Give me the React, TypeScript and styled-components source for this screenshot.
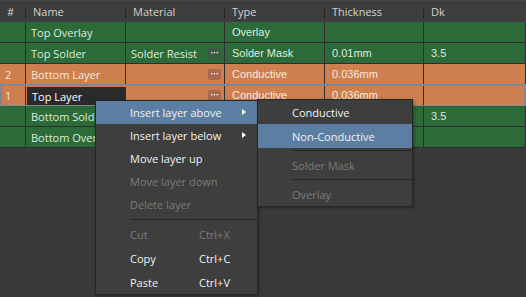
import React from "react";
import styled, { createGlobalStyle, css } from "styled-components";

const GlobalStyle = createGlobalStyle`
  html, body {
    margin: 0;
    padding: 0;
    background: #3a3a3a;
  }
  body {
    width: 526px;
    height: 297px;
    overflow: hidden;
    font-family: "Open Sans", "Noto Sans", sans-serif;
    font-size: 11px;
  }
`;

const COLS = "26px 100px 99px 100px 99px 1fr";

const Screen = styled.div`
  position: relative;
  width: 526px;
  height: 297px;
  background: #3a3a3a;
  overflow: hidden;
`;

const Header = styled.div`
  display: grid;
  grid-template-columns: ${COLS};
  height: 21px;
  background: #3d3d3d;
  border-top: 1px solid #474747;
  color: #d2d2d2;
`;

const HeadCell = styled.div<{ $first?: boolean }>`
  position: relative;
  display: flex;
  align-items: center;
  padding-left: ${(p) => (p.$first ? "7px" : "7px")};
  &::before {
    content: "";
    display: ${(p) => (p.$first ? "none" : "block")};
    position: absolute;
    left: -1px;
    top: 6px;
    height: 11px;
    width: 1px;
    background: #262626;
  }
`;

type Tone = "green" | "orange";

const toneBg = { green: "#2c6a39", orange: "#cd7f4f" };
const toneText = { green: "#ddeedd", orange: "#f7e9dc" };
const toneBtn = { green: "#3d5b44", orange: "#a8694c" };

const Row = styled.div<{ $tone: Tone; $selected?: boolean }>`
  position: relative;
  display: grid;
  grid-template-columns: ${COLS};
  height: 21px;
  background: ${(p) => toneBg[p.$tone]};
  color: ${(p) => toneText[p.$tone]};
  ${(p) =>
    p.$selected &&
    css`
      &::after {
        content: "";
        position: absolute;
        inset: -1px 0 -1px 0;
        border: 2px solid #7c8896;
        pointer-events: none;
      }
    `}
`;

const Cell = styled.div<{ $mono?: boolean; $editing?: boolean }>`
  display: flex;
  align-items: center;
  justify-content: space-between;
  padding: 0 3px 0 ${(p) => (p.$mono ? "7px" : "5px")};
  border-right: 1px solid #2e2e2e;
  border-bottom: 1px solid #2e2e2e;
  white-space: nowrap;
  overflow: hidden;
  font-family: ${(p) =>
    p.$mono ? `"Liberation Sans", Arial, sans-serif` : `"Open Sans", sans-serif`};
  ${(p) =>
    p.$editing &&
    css`
      background: #2a2a2a;
      color: #ffffff;
      margin: 2px 0 0 1px;
    `}
`;

const DotsButton = styled.span<{ $tone: Tone }>`
  display: flex;
  align-items: center;
  justify-content: center;
  width: 13px;
  height: 11px;
  border-radius: 2px;
  background: ${(p) => toneBtn[p.$tone]};
  flex: none;
`;

const Menu = styled.div<{ $left: number; $top: number; $width: number }>`
  position: absolute;
  left: ${(p) => p.$left}px;
  top: ${(p) => p.$top}px;
  width: ${(p) => p.$width}px;
  box-sizing: border-box;
  background: #3e3e3e;
  border: 1px solid #262626;
  box-shadow: 1px 1px 3px rgba(0, 0, 0, 0.35);
  color: #f2f2f2;
`;

const Item = styled.div<{ $h: number; $active?: boolean; $disabled?: boolean; $pad: number }>`
  position: relative;
  display: flex;
  align-items: center;
  height: ${(p) => p.$h}px;
  padding-left: ${(p) => p.$pad}px;
  background: ${(p) => (p.$active ? "#5c7ea2" : "transparent")};
  color: ${(p) => (p.$disabled ? "#7b7b7b" : "#f2f2f2")};
  white-space: nowrap;
`;

const Label = styled.span`
  width: 69px;
`;

const Shortcut = styled.span``;

const Arrow = styled.span`
  position: absolute;
  right: 11px;
  top: 50%;
  margin-top: -4px;
  width: 0;
  height: 0;
  border-top: 3.5px solid transparent;
  border-bottom: 3.5px solid transparent;
  border-left: 4px solid #ffffff;
`;

const Separator = styled.div<{ $h: number; $indent: number }>`
  height: ${(p) => p.$h}px;
  display: flex;
  align-items: center;
  padding-left: ${(p) => p.$indent}px;
  &::after {
    content: "";
    flex: 1;
    height: 1px;
    background: #262626;
  }
`;

const Dots = () => (
  <svg width="7" height="2" viewBox="0 0 7 2">
    <rect x="0" y="0" width="1.4" height="1.4" fill="#f0f0f0" />
    <rect x="2.8" y="0" width="1.4" height="1.4" fill="#f0f0f0" />
    <rect x="5.6" y="0" width="1.4" height="1.4" fill="#f0f0f0" />
  </svg>
);

type Layer = {
  num: string;
  name: string;
  material: string;
  button: boolean;
  type: string;
  thickness: string;
  dk: string;
  tone: Tone;
  selected?: boolean;
};

const layers: Layer[] = [
  { num: "", name: "Top Overlay", material: "", button: false, type: "Overlay", thickness: "", dk: "", tone: "green" },
  { num: "", name: "Top Solder", material: "Solder Resist", button: true, type: "Solder Mask", thickness: "0.01mm", dk: "3.5", tone: "green" },
  { num: "2", name: "Bottom Layer", material: "", button: true, type: "Conductive", thickness: "0.036mm", dk: "", tone: "orange" },
  { num: "1", name: "Top Layer", material: "", button: true, type: "Conductive", thickness: "0.036mm", dk: "", tone: "orange", selected: true },
  { num: "", name: "Bottom Solder", material: "Solder Resist", button: true, type: "Solder Mask", thickness: "0.01mm", dk: "3.5", tone: "green" },
  { num: "", name: "Bottom Overlay", material: "", button: false, type: "Overlay", thickness: "", dk: "", tone: "green" },
];

const columns = ["#", "Name", "Material", "Type", "Thickness", "Dk"];

export default function App() {
  return (
    <Screen>
      <GlobalStyle />
      <Header>
        {columns.map((c, i) => (
          <HeadCell key={c} $first={i === 0}>
            {c}
          </HeadCell>
        ))}
      </Header>
      {layers.map((l) => (
        <Row key={l.name} $tone={l.tone} $selected={l.selected}>
          <Cell>{l.num}</Cell>
          <Cell $editing={l.selected}>{l.name}</Cell>
          <Cell>
            <span>{l.material}</span>
            {l.button && (
              <DotsButton $tone={l.tone}>
                <Dots />
              </DotsButton>
            )}
          </Cell>
          <Cell $mono>{l.type}</Cell>
          <Cell $mono>{l.thickness}</Cell>
          <Cell $mono>{l.dk}</Cell>
        </Row>
      ))}

      <Menu $left={95} $top={100} $width={163}>
        <Item $h={23} $pad={34} $active>
          Insert layer above
          <Arrow />
        </Item>
        <Item $h={23} $pad={34}>
          Insert layer below
          <Arrow />
        </Item>
        <Item $h={23} $pad={34}>Move layer up</Item>
        <Item $h={23} $pad={34} $disabled>Move layer down</Item>
        <Item $h={23} $pad={34} $disabled>Delete layer</Item>
        <Separator $h={6} $indent={34} />
        <Item $h={24} $pad={34} $disabled>
          <Label>Cut</Label>
          <Shortcut>Ctrl+X</Shortcut>
        </Item>
        <Item $h={24} $pad={34}>
          <Label>Copy</Label>
          <Shortcut>Ctrl+C</Shortcut>
        </Item>
        <Item $h={24} $pad={34}>
          <Label>Paste</Label>
          <Shortcut>Ctrl+V</Shortcut>
        </Item>
      </Menu>

      <Menu $left={257} $top={99} $width={156}>
        <Item $h={24} $pad={34}>Conductive</Item>
        <Item $h={24} $pad={34} $active>Non-Conductive</Item>
        <Separator $h={5} $indent={34} />
        <Item $h={24} $pad={34} $disabled>Solder Mask</Item>
        <Separator $h={5} $indent={34} />
        <Item $h={24} $pad={34} $disabled>Overlay</Item>
      </Menu>
    </Screen>
  );
}
